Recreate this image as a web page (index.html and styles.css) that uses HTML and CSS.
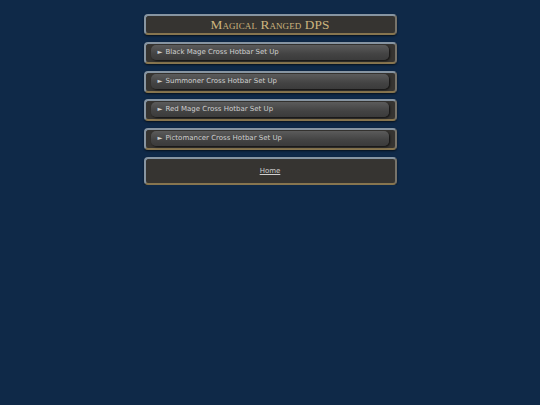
FILE: index.html
```html
<!DOCTYPE html>
<html lang="en">
<head>
  <meta charset="UTF-8" />
  <meta name="viewport" content="width=device-width, initial-scale=1.0"/>
  <title>Magical Ranged DPS</title>
  <link rel="stylesheet" href="styles.css">
</head>
<body>
  <div class="page">
    <h1 class="panel title">Magical Ranged DPS</h1>

    <div class="panel">
      <details>
        <summary>Black Mage Cross Hotbar Set Up</summary>
        <p>Coming soon.</p>
      </details>
    </div>

    <div class="panel">
      <details>
        <summary>Summoner Cross Hotbar Set Up</summary>
        <p>Coming soon.</p>
      </details>
    </div>

    <div class="panel">
      <details>
        <summary>Red Mage Cross Hotbar Set Up</summary>
        <p>Coming soon.</p>
      </details>
    </div>

    <div class="panel">
      <details>
        <summary>Pictomancer Cross Hotbar Set Up</summary>
        <p>Coming soon.</p>
      </details>
    </div>

    <div class="panel footer">
      <a href="index.html">Home</a>
    </div>
  </div>
</body>
</html>
```

FILE: styles.css
```css
body {
  margin: 0;
  padding-top: 14px;
  background-color: #0f2948;
  font-family: "DejaVu Sans", Verdana, sans-serif;
  color: #d8d8d8;
}

.page {
  width: 253px;
  margin: 0 auto;
  display: flex;
  flex-direction: column;
  gap: 6.75px;
}

.panel {
  background-color: #363431;
  border: 2px solid #8795a2;
  border-bottom-color: #87754f;
  border-right-color: #77736a;
  border-radius: 4px;
  box-shadow: 0 1px 2px rgba(0, 0, 0, 0.6);
  padding: 1px 6px 2px 5px;
}

.title {
  margin: 0;
  padding: 0;
  height: 17px;
  line-height: 18px;
  text-align: center;
  font-family: "Liberation Serif", "Times New Roman", serif;
  font-variant: small-caps;
  font-weight: normal;
  font-size: 13.3px;
  color: #cdb57f;
  letter-spacing: 0.1px;
}

details p {
  margin: 4px 4px 2px;
  font-size: 7px;
}

summary {
  list-style: none;
  cursor: pointer;
  height: 15px;
  line-height: 15px;
  padding-left: 7px;
  font-size: 7px;
  color: #cfcfcf;
  border-radius: 5px;
  background: linear-gradient(#5b5b5b, #434343 60%, #3b3b3b);
  box-shadow: 1px 1px 2px #111;
}

summary::-webkit-details-marker {
  display: none;
}

summary::before {
  content: "\25BA";
  margin-right: 3px;
  font-size: 6.5px;
}

.footer {
  height: 24px;
  padding: 0;
  display: flex;
  align-items: center;
  justify-content: center;
}

.footer a {
  color: #cfcfcf;
  font-size: 7px;
}
```
